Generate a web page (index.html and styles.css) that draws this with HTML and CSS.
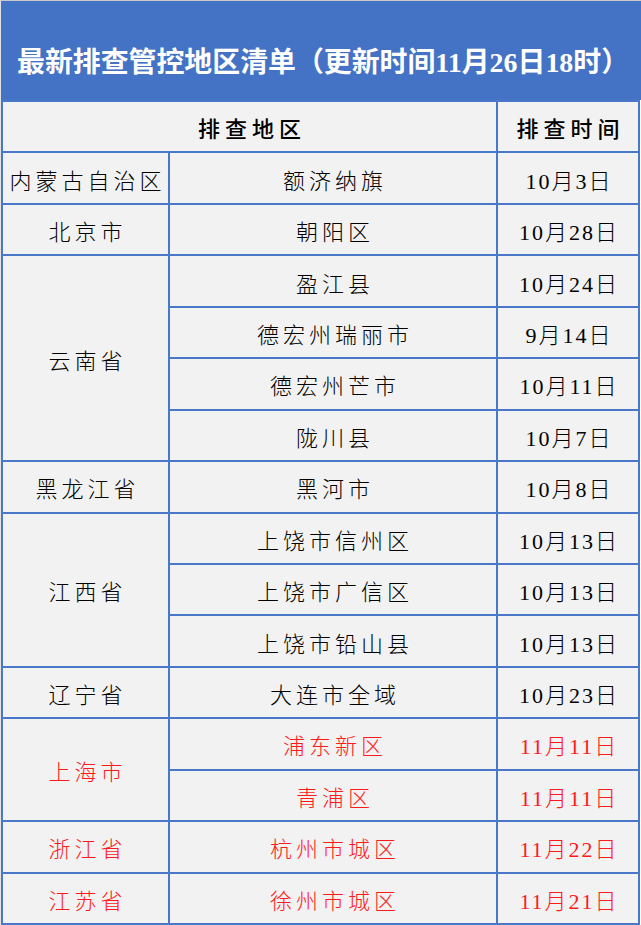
FILE: index.html
```html
<!DOCTYPE html>
<html>
<head>
<meta charset="utf-8">
<title>最新排查管控地区清单</title>
<link rel="stylesheet" href="styles.css">
</head>
<body>
<div class="page">
  <div class="title">最新排查管控地区清单（更新时间11月26日18时）</div>
  <div class="grid">
    <div class="cell head c12">排查地区</div>
    <div class="cell head c3">排查时间</div>

    <div class="cell c1 region">内蒙古自治区</div>
    <div class="cell c2 region">额济纳旗</div>
    <div class="cell c3 date">10月3日</div>

    <div class="cell c1 region">北京市</div>
    <div class="cell c2 region">朝阳区</div>
    <div class="cell c3 date">10月28日</div>

    <div class="cell c1 region span4">云南省</div>
    <div class="cell c2 region">盈江县</div>
    <div class="cell c3 date">10月24日</div>
    <div class="cell c2 region">德宏州瑞丽市</div>
    <div class="cell c3 date">9月14日</div>
    <div class="cell c2 region">德宏州芒市</div>
    <div class="cell c3 date">10月11日</div>
    <div class="cell c2 region">陇川县</div>
    <div class="cell c3 date">10月7日</div>

    <div class="cell c1 region">黑龙江省</div>
    <div class="cell c2 region">黑河市</div>
    <div class="cell c3 date">10月8日</div>

    <div class="cell c1 region span3">江西省</div>
    <div class="cell c2 region">上饶市信州区</div>
    <div class="cell c3 date">10月13日</div>
    <div class="cell c2 region">上饶市广信区</div>
    <div class="cell c3 date">10月13日</div>
    <div class="cell c2 region">上饶市铅山县</div>
    <div class="cell c3 date">10月13日</div>

    <div class="cell c1 region">辽宁省</div>
    <div class="cell c2 region">大连市全域</div>
    <div class="cell c3 date">10月23日</div>

    <div class="cell c1 region red span2">上海市</div>
    <div class="cell c2 region red">浦东新区</div>
    <div class="cell c3 date red">11月11日</div>
    <div class="cell c2 region red">青浦区</div>
    <div class="cell c3 date red">11月11日</div>

    <div class="cell c1 region red">浙江省</div>
    <div class="cell c2 region red">杭州市城区</div>
    <div class="cell c3 date red">11月22日</div>

    <div class="cell c1 region red">江苏省</div>
    <div class="cell c2 region red">徐州市城区</div>
    <div class="cell c3 date red">11月21日</div>
  </div>
</div>
</body>
</html>
```
FILE: styles.css
```css
html, body {
  margin: 0;
  padding: 0;
  background: #ffffff;
}

.page {
  width: 640px;
  border-top: 1px solid #c9c9c9;
  border-left: 1px solid #e2e2e2;
  font-family: "Liberation Serif", "Noto Sans CJK SC", serif;
}

.title {
  height: 99px;
  box-sizing: border-box;
  padding: 19px 0 0 16px;
  display: flex;
  align-items: center;
  background: #4472c4;
  color: #ffffff;
  font-size: 27.9px;
  font-weight: 700;
  white-space: nowrap;
}

.grid {
  display: grid;
  grid-template-columns: 165px 326px 140px;
  grid-auto-rows: 49.44px;
  gap: 2px;
  padding: 2px;
  width: 635px;
  background: #4a78c9;
}

.cell {
  background: #f2f2f2;
  color: #000000;
  display: flex;
  align-items: center;
  justify-content: center;
  font-size: 22px;
  font-weight: 300;
  white-space: nowrap;
  padding-top: 1px;
  box-sizing: border-box;
}

.c1 { grid-column: 1; }
.c2 { grid-column: 2; }
.c3 { grid-column: 3; }
.c12 { grid-column: 1 / span 2; }

.span2 { grid-row: span 2; }
.span3 { grid-row: span 3; }
.span4 { grid-row: span 4; }

.head {
  font-weight: 500;
  letter-spacing: 5px;
  padding-left: 5px;
}

.region {
  letter-spacing: 4px;
  padding-left: 4px;
}

.date {
  letter-spacing: 2px;
  padding-left: 2px;
}

.red {
  color: #ff1a1a;
}
```
